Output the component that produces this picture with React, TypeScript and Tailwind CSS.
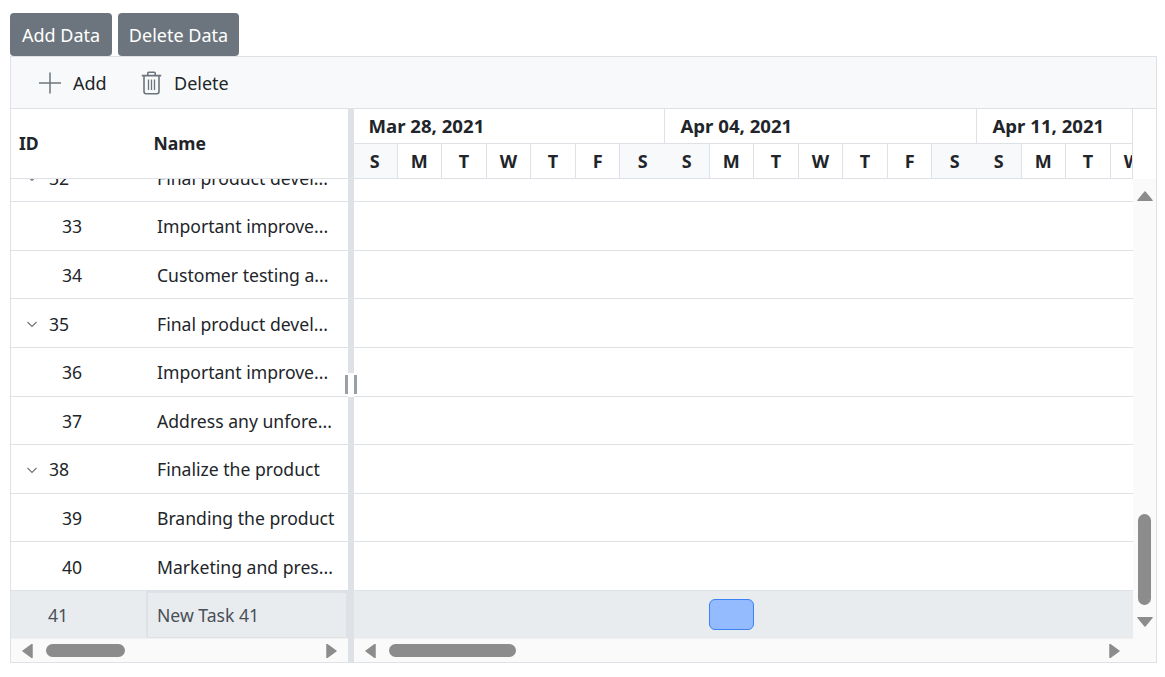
import React from "react";

const rows: { id: number; name: string; parent?: boolean }[] = [
  { id: 32, name: "Final product devel...", parent: true },
  { id: 33, name: "Important improve..." },
  { id: 34, name: "Customer testing a..." },
  { id: 35, name: "Final product devel...", parent: true },
  { id: 36, name: "Important improve..." },
  { id: 37, name: "Address any unfore..." },
  { id: 38, name: "Finalize the product", parent: true },
  { id: 39, name: "Branding the product" },
  { id: 40, name: "Marketing and pres..." },
];

const weeks = ["Mar 28, 2021", "Apr 04, 2021", "Apr 11, 2021"];
const days = ["S", "M", "T", "W", "T", "F", "S"];

function Tri({ dir, className }: { dir: "l" | "r" | "u" | "d"; className: string }) {
  const pts = { l: "10,0.5 10,13.5 1,7", r: "1,0.5 1,13.5 10,7", u: "1,9.5 15,9.5 8,1", d: "1,0.5 15,0.5 8,9" }[dir];
  const wide = dir === "u" || dir === "d";
  return (
    <svg width={wide ? 16 : 11} height={wide ? 10 : 14} viewBox={wide ? "0 0 16 10" : "0 0 11 14"} className={className}>
      <polygon points={pts} fill="#8c8c8c" stroke="#8c8c8c" strokeWidth="1.5" strokeLinejoin="round" />
    </svg>
  );
}

export default function App() {
  return (
    <div className="w-[1165px] h-[677px] bg-white pl-[10px] pr-2 pt-[13px] text-[#212529] overflow-hidden font-['Noto_Sans','Open_Sans',sans-serif] text-[18px]">
      <div className="flex gap-[6px]">
        <button className="h-[43px] w-[102px] pt-[1px] rounded-[4px] bg-[#6c757d] text-white text-[18px]">Add Data</button>
        <button className="h-[43px] w-[121px] pt-[1px] rounded-[4px] bg-[#6c757d] text-white text-[18px]">Delete Data</button>
      </div>

      <div className="w-[1147px] h-[607px] border border-[#dee2e6] flex flex-col">
        <div className="h-[52px] shrink-0 bg-[#f8f9fa] border-b border-[#dee2e6] flex items-center pl-[27px]">
          <svg width="24" height="24" viewBox="0 0 24 24" fill="none" stroke="#6c757d" strokeWidth="1.5">
            <path d="M12 1.5V22.5M1 12H23" />
          </svg>
          <span className="ml-[11px] w-[68px] pt-[1px]">Add</span>
          <svg width="21" height="24" viewBox="0 0 21 24" fill="none" stroke="#6c757d" strokeWidth="1.6">
            <path d="M0.8 4.6H20.2M6.8 4V2.2C6.8 1.6 7.3 1.2 7.8 1.2H13.2C13.7 1.2 14.2 1.6 14.2 2.2V4" />
            <path d="M3 5V20.6C3 21.9 3.9 22.8 5 22.8H16C17.1 22.8 18 21.9 18 20.6V5" />
            <path d="M7.5 8.5V19M10.5 8.5V19M13.5 8.5V19" strokeWidth="1.3" />
          </svg>
          <span className="ml-[12px] pt-[1px]">Delete</span>
        </div>

        <div className="flex flex-1 min-h-0">
          {/* left grid */}
          <div className="w-[337px] shrink-0 flex flex-col">
            <div className="h-[70px] shrink-0 flex items-center pt-[1px] border-b border-[#dee2e6] font-bold text-[17.6px] leading-none">
              <span className="w-[142.5px] pl-2">ID</span>
              <span>Name</span>
            </div>
            <div className="flex-1 min-h-0 overflow-hidden text-[17.6px]">
              <div className="-mt-[25.3px]">
                {rows.map((r) => (
                  <div key={r.id} className="h-[48.6px] box-border border-b border-[#dee2e6] flex items-center pt-[1px]">
                    <div className="w-[135px] shrink-0 flex items-center">
                      {r.parent ? (
                        <>
                          <svg width="12" height="12" viewBox="0 0 12 12" fill="none" stroke="#6c757d" strokeWidth="1.1" className="ml-[15px] mr-[11px]">
                            <path d="M1.5 4L6 8.5L10.5 4" />
                          </svg>
                          <span>{r.id}</span>
                        </>
                      ) : (
                        <span className="pl-[51px]">{r.id}</span>
                      )}
                    </div>
                    <div className="pl-[11px] whitespace-nowrap">{r.name}</div>
                  </div>
                ))}
                <div className="h-[48px] bg-[#e9ecef] flex text-[#495057]">
                  <div className="w-[135px] shrink-0 pl-[37px] flex items-center">41</div>
                  <div className="flex-1 border-2 border-[#dee2e6] pl-[9px] flex items-center">New Task 41</div>
                </div>
              </div>
            </div>
            <div className="h-[24px] shrink-0 bg-[#fafafa] border-t border-[#f0f0f0] flex items-center pl-[11px] pr-[11px]">
              <Tri dir="l" className="shrink-0" />
              <div className="ml-[13px] w-[79px] h-[13px] rounded-full bg-[#8c8c8c]" />
              <div className="flex-1" />
              <Tri dir="r" className="shrink-0" />
            </div>
          </div>

          {/* splitter */}
          <div className="w-[6px] shrink-0 bg-[#dee2e6] relative">
            <div className="absolute left-0 top-[264px] w-[6px] h-[24px] bg-white" />
            <div className="absolute left-[-3px] top-[266px] w-[12px] h-[19px] flex justify-between">
              <div className="w-[3px] h-[19px] bg-[#9aa0a6]" />
              <div className="w-[3px] h-[19px] bg-[#9aa0a6]" />
            </div>
          </div>

          {/* timeline */}
          <div className="flex-1 min-w-0 flex">
            <div className="w-[779px] shrink-0 flex flex-col">
              <div className="h-[70px] shrink-0 overflow-hidden border-b border-r border-[#dee2e6]">
                <div className="flex w-[1000px] -ml-[1px]">
                  {weeks.map((w) => (
                    <div key={w} className="w-[312px] shrink-0 border-r border-[#dee2e6]">
                      <div className="h-[35px] border-b border-[#dee2e6] pl-[15.5px] flex items-center font-bold text-[18.6px] leading-none whitespace-nowrap">
                        {w}
                      </div>
                      <div className="h-[34px] flex">
                        {days.map((d, i) => (
                          <div
                            key={i}
                            className={`w-[44.57px] shrink-0 box-border flex items-center justify-center font-bold leading-none border-r border-[#dee2e6] last:border-r-0 ${
                              i === 0 || i === 6 ? "bg-[#f8f9fa]" : "bg-white"
                            }`}
                          >
                            {d}
                          </div>
                        ))}
                      </div>
                    </div>
                  ))}
                </div>
              </div>
              <div className="flex-1 min-h-0 overflow-hidden">
                <div className="-mt-[25.3px]">
                  {rows.map((r) => (
                    <div key={r.id} className="h-[48.6px] box-border border-b border-[#dee2e6]" />
                  ))}
                  <div className="h-[48px] bg-[#e9ecef] flex items-center pl-[355px] pb-[1px]">
                    <div className="w-[45px] h-[31px] rounded-[6px] bg-[#93bbfd] border border-[#3b82f6]" />
                  </div>
                </div>
              </div>
              <div className="h-[24px] shrink-0 bg-[#fafafa] border-t border-[#f0f0f0] flex items-center pl-[11px] pr-[13px]">
                <Tri dir="l" className="shrink-0" />
                <div className="ml-[13px] w-[127px] h-[13px] rounded-full bg-[#8c8c8c]" />
                <div className="flex-1" />
                <Tri dir="r" className="shrink-0" />
              </div>
            </div>

            {/* vertical scrollbar */}
            <div className="flex-1 flex flex-col items-center">
              <div className="h-[70px] w-full bg-white shrink-0" />
              <div className="flex-1 w-full bg-[#fafafa] flex flex-col items-center pb-[35px] pt-[12px]">
                <Tri dir="u" className="shrink-0" />
                <div className="flex-1" />
                <div className="w-[13px] h-[91px] rounded-full bg-[#8c8c8c]" />
                <Tri dir="d" className="shrink-0 mt-[12px]" />
              </div>
            </div>
          </div>
        </div>
      </div>
    </div>
  );
}
